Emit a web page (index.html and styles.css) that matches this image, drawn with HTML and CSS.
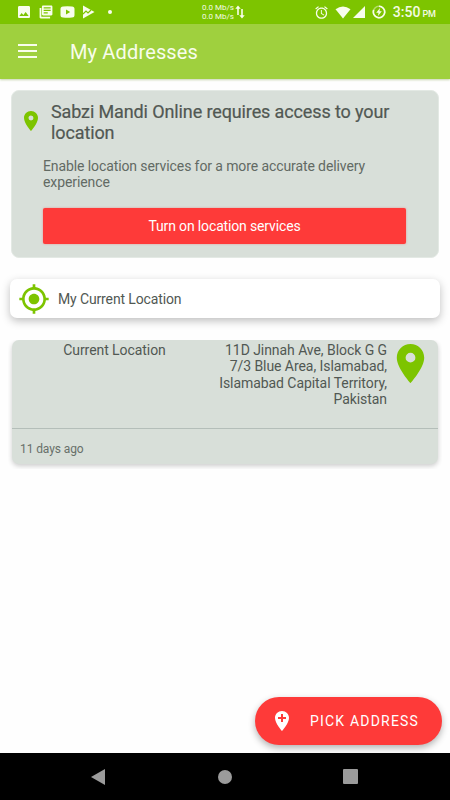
FILE: index.html
```html
<!DOCTYPE html>
<html lang="en">
<head>
    <meta charset="UTF-8">
    <meta name="viewport" content="width=device-width, initial-scale=1.0">
    <title>My Addresses</title>
    <link rel="stylesheet" href="styles.css">
</head>
<body>
    <div class="status-bar">
        <div class="notifications">
            <svg width="16" height="16" viewBox="0 0 24 24"><path d="M21 19V5c0-1.1-.9-2-2-2H5c-1.1 0-2 .9-2 2v14c0 1.1.9 2 2 2h14c1.1 0 2-.9 2-2zM8.500 13.500l2.500 3.010L14.500 12l4.500 6H5l3.500-4.500z"/></svg>
            <svg width="14" height="14" viewBox="0 0 24 24"><path d="M1 5h3v15h15v3H3c-1.100 0-2-.9-2-2zM7 1h14c1.100 0 2 .9 2 2v13c0 1.100-.9 2-2 2H7c-1.100 0-2-.9-2-2V3c0-1.100.9-2 2-2zm1 3v2.200h12V4zm0 4.200v2.200h12V8.200zm0 4.200v2.200h7v-2.200z" fill-rule="evenodd"/></svg>
            <svg class="video" width="15" height="12" viewBox="0 0 15 12"><path d="M3 .5Q7.500 0 12 .5q2.500 0 2.500 2.500v6q0 2.500-2.500 2.500-4.500.5-9 0Q.5 11.500.5 9V3Q.5.500 3 .5zM6 3.600v4.800L10.200 6z" fill-rule="evenodd"/></svg>
            <svg width="13" height="14" viewBox="0 0 13 14"><path d="M1 .5L12.500 7 1 13.500z"/><path class="line" d="M1 9l3-3 2 2 3-3"/></svg>
            <span class="dot"></span>
        </div>
        <div class="speed">
            <div>0.0 Mb/s<br>0.0 Mb/s</div>
            <svg width="10" height="14" viewBox="0 0 10 14"><path d="M2.200 10V3.800H.3L3 .5l2.700 3.300H3.800V10zM6.200 4h1.600v6.200h1.900L7 13.500l-2.700-3.300h1.900z"/></svg>
        </div>
        <div class="system">
            <svg class="alarm" width="15" height="15" viewBox="0 0 24 24"><path d="M22 5.720l-4.600-3.860-1.290 1.530 4.600 3.860L22 5.720zM7.880 3.390L6.600 1.860 2 5.710l1.290 1.530 4.590-3.850zM12.500 8H11v6l4.750 2.850.75-1.230-4-2.370V8zM12 4c-4.970 0-9 4.030-9 9s4.020 9 9 9c4.970 0 9-4.030 9-9s-4.030-9-9-9zm0 16c-3.870 0-7-3.130-7-7s3.130-7 7-7 7 3.130 7 7-3.130 7-7 7z"/></svg>
            <svg class="wifi" width="16" height="13" viewBox="0 0 16 13"><path d="M.5 3.300Q8-2.300 15.500 3.300L8 12.500z"/></svg>
            <svg class="signal" width="12" height="12" viewBox="0 0 12 12"><path d="M0 12L12 0v12z"/></svg>
            <svg class="battery" width="14" height="14" viewBox="0 0 14 14"><circle class="ring faint" cx="7" cy="7" r="5.700"/><path class="ring" d="M7 1.300a5.700 5.700 0 1 1-5.300 3.700"/><path d="M8 3L4.200 7.700h2.300L6 11l3.800-4.800H7.500z"/></svg>
            <span class="clock">3:50<small>PM</small></span>
        </div>
    </div>

    <div class="app-bar">
        <div class="menu"><span></span><span></span><span></span></div>
        <h1>My Addresses</h1>
    </div>

    <div class="content">
        <div class="access-card">
            <div class="access-head">
                <svg class="pin" width="24" height="24" viewBox="0 0 24 24"><path d="M12 2C8.130 2 5 5.130 5 9c0 5.250 7 13 7 13s7-7.750 7-13c0-3.870-3.130-7-7-7zm0 9.500a2.500 2.500 0 0 1 0-5 2.500 2.500 0 0 1 0 5z"/></svg>
                <h2>Sabzi Mandi Online requires access to your location</h2>
            </div>
            <p>Enable location services for a more accurate delivery experience</p>
            <button class="turn-on">Turn on location services</button>
        </div>

        <div class="current">
            <svg class="pin" width="32" height="32" viewBox="0 0 24 24"><path d="M12 8c-2.210 0-4 1.790-4 4s1.790 4 4 4 4-1.790 4-4-1.790-4-4-4zm8.940 3c-.46-4.170-3.770-7.480-7.940-7.940V1h-2v2.060C6.830 3.520 3.520 6.830 3.060 11H1v2h2.060c.46 4.170 3.770 7.480 7.940 7.940V23h2v-2.060c4.170-.46 7.480-3.770 7.940-7.940H23v-2h-2.060zM12 19c-3.870 0-7-3.130-7-7s3.130-7 7-7 7 3.130 7 7-3.130 7-7 7z"/></svg>
            <span>My Current Location</span>
        </div>

        <div class="address-wrap">
            <div class="address-card">
                <div class="address-row">
                    <div class="label">Current Location</div>
                    <div class="address">11D Jinnah Ave, Block G G<br>7/3 Blue Area, Islamabad,<br>Islamabad Capital Territory,<br>Pakistan</div>
                    <svg class="pin" width="47" height="47" viewBox="0 0 24 24"><path d="M12 2C8.130 2 5 5.130 5 9c0 5.250 7 13 7 13s7-7.750 7-13c0-3.870-3.130-7-7-7zm0 9.500a2.500 2.500 0 0 1 0-5 2.500 2.500 0 0 1 0 5z"/></svg>
                </div>
                <div class="age">11 days ago</div>
            </div>
        </div>
    </div>

    <div class="bottom">
        <button class="pick">
            <svg width="24" height="24" viewBox="0 0 24 24"><path d="M12 2C8.140 2 5 5.140 5 9c0 5.250 7 13 7 13s7-7.750 7-13c0-3.860-3.140-7-7-7zm4 8h-3v3h-2v-3H8V8h3V5h2v3h3v2z"/></svg>
            <span>PICK ADDRESS</span>
        </button>
    </div>

    <div class="nav-bar">
        <svg width="16" height="18" viewBox="0 0 16 18"><path d="M15 1v16L1 9z"/></svg>
        <svg width="14" height="14" viewBox="0 0 14 14"><circle cx="7" cy="7" r="7"/></svg>
        <svg width="15" height="15" viewBox="0 0 15 15"><rect width="15" height="15" rx="1"/></svg>
    </div>
</body>
</html>
```

FILE: styles.css
```css
* {
    box-sizing: border-box;
}
body {
    display: flex;
    flex-direction: column;
    width: 450px;
    height: 800px;
    margin: 0;
    background: #fefefe;
    color: #515853;
    font-family: Roboto, sans-serif;
    overflow: hidden;
}
svg {
    display: block;
    flex: none;
}
h1, h2, p {
    margin: 0;
    font-weight: 400;
}
button {
    border: 0;
    font-family: inherit;
    color: #fff;
    background: #fe3a39;
}
.status-bar {
    display: flex;
    justify-content: space-between;
    height: 24px;
    padding: 0 14px 0 16px;
    background: #7dc400;
    color: #f4fbe4;
    fill: #f8fdec;
}
.notifications, .speed, .system {
    display: flex;
    align-items: center;
}
.notifications {
    gap: 7px;
    width: 186px;
}
.notifications .line {
    fill: none;
    stroke: #7dc400;
    stroke-width: 1.2;
}
.dot {
    width: 4px;
    height: 4px;
    margin-left: 6px;
    border-radius: 50%;
    background: #f8fdec;
}
.speed {
    flex: 1;
    gap: 1px;
    font-size: 8px;
    line-height: 9px;
}
.clock {
    margin-left: 7px;
    font-size: 14px;
    font-weight: 500;
}
.clock small {
    margin-left: 2px;
    font-size: 9px;
}
.wifi {
    margin-left: 6px;
}
.signal {
    margin-left: 2px;
}
.battery {
    margin-left: 7px;
}
.ring {
    fill: none;
    stroke: #f8fdec;
    stroke-width: 1.6;
}
.faint {
    opacity: 0.45;
}
.app-bar {
    display: flex;
    align-items: center;
    height: 55px;
    padding-left: 18px;
    background: #9fd03e;
    box-shadow: 0 1px 2px rgba(120, 150, 60, 0.4);
}
.menu {
    display: flex;
    flex-direction: column;
    gap: 4px;
    width: 19px;
    margin: -2px 33px 0 0;
}
.menu span {
    height: 2px;
    background: #f8fdec;
}
h1 {
    font-size: 20px;
    letter-spacing: 0.15px;
    color: #f8fdec;
}
.content {
    flex: 1;
    padding: 11px 8px 0;
}
.access-card {
    height: 168px;
    margin: 0 3px;
    padding: 10px 32px 0 7px;
    border: 1px solid #e3e9e4;
    border-radius: 8px;
    background: #d8dfd9;
}
.access-head {
    display: flex;
    gap: 8px;
}
.access-head .pin {
    margin-top: 8px;
}
.pin {
    fill: #7dc400;
}
h2 {
    font-size: 18px;
    line-height: 21px;
    letter-spacing: -0.12px;
    -webkit-text-stroke: 0.2px #515853;
}
.access-card p {
    margin: 15px 0 18px 24px;
    font-size: 14px;
    line-height: 16px;
    letter-spacing: -0.1px;
    color: #626a64;
}
.turn-on {
    display: block;
    width: 363px;
    height: 36px;
    margin-left: 24px;
    border-radius: 2px;
    font-size: 14px;
    letter-spacing: -0.15px;
    box-shadow: 0 0 2px rgba(254, 58, 57, 0.5);
}
.current {
    display: flex;
    align-items: center;
    gap: 8px;
    height: 39px;
    margin: 21px 2px 0;
    padding-left: 8px;
    border-radius: 7px;
    background: #fff;
    font-size: 14px;
    letter-spacing: -0.13px;
    box-shadow: 0 3px 8px rgba(0, 0, 0, 0.25);
}
.address-wrap {
    height: 129px;
    margin-top: 22px;
    padding: 0 4px;
    overflow: hidden;
}
.address-card {
    height: 124px;
    border-radius: 7px;
    background: #d8dfd9;
    box-shadow: 0 2px 5px rgba(0, 0, 0, 0.2);
}
.address-row {
    display: flex;
    height: 89px;
    border-bottom: 1px solid #b4beb9;
    padding-top: 2px;
    font-size: 14px;
    line-height: 16.3px;
    letter-spacing: -0.06px;
}
.label {
    width: 205px;
    text-align: center;
}
.address {
    width: 170px;
    text-align: right;
}
.address-row .pin {
    margin-top: -2px;
}
.age {
    padding: 12px 8px;
    font-size: 12px;
    line-height: 16px;
    letter-spacing: -0.1px;
    color: #68706a;
}
.bottom {
    display: flex;
    justify-content: flex-end;
    padding: 0 8px 8px;
}
.pick {
    display: flex;
    align-items: center;
    gap: 16px;
    width: 187px;
    height: 48px;
    padding: 0 0 0 15px;
    border-radius: 24px;
    font-size: 14px;
    letter-spacing: 1.2px;
    box-shadow: 0 3px 7px rgba(0, 0, 0, 0.3);
}
.pick svg {
    fill: #fff;
}
.nav-bar {
    display: flex;
    align-items: center;
    justify-content: space-between;
    height: 47px;
    padding: 0 92px 0 90px;
    background: #000;
    fill: #9b9b9b;
}
```
